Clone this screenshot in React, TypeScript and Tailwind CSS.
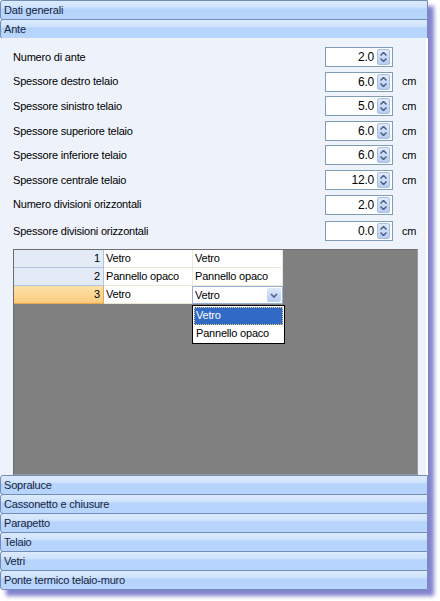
import React from 'react';

const font = { fontFamily: '"Liberation Sans", Arial, sans-serif', letterSpacing: '-0.2px' };

function Header({ title }: { title: string }) {
  return (
    <div className="h-[20px] shrink-0 flex items-center pl-[3px] border border-[#6f8db8] rounded-l-[3px] -mt-px first:mt-0 bg-[linear-gradient(to_bottom,#dcebfd_0%,#cfe3fd_35%,#b5d3fb_45%,#b8d6fd_100%)] text-[11px] text-[#16243c] leading-none">
      {title}
    </div>
  );
}

function Spinner() {
  return (
    <div className="w-[13px] h-[16px] mr-[2px] rounded-[2px] border border-[#a9bee2] bg-[linear-gradient(to_bottom,#dfe9fb,#b6cdf4)] flex flex-col items-center justify-center gap-[2px]">
      <svg width="7" height="4" viewBox="0 0 7 4"><path d="M0.5 3.5 L3.5 0.5 L6.5 3.5" stroke="#4d6185" strokeWidth="1.5" fill="none" /></svg>
      <svg width="7" height="4" viewBox="0 0 7 4"><path d="M0.5 0.5 L3.5 3.5 L6.5 0.5" stroke="#4d6185" strokeWidth="1.5" fill="none" /></svg>
    </div>
  );
}

const fields = [
  { label: 'Numero di ante', value: '2.0', unit: '' },
  { label: 'Spessore destro telaio', value: '6.0', unit: 'cm' },
  { label: 'Spessore sinistro telaio', value: '5.0', unit: 'cm' },
  { label: 'Spessore superiore telaio', value: '6.0', unit: 'cm' },
  { label: 'Spessore inferiore telaio', value: '6.0', unit: 'cm' },
  { label: 'Spessore centrale telaio', value: '12.0', unit: 'cm' },
  { label: 'Numero divisioni orizzontali', value: '2.0', unit: '' },
  { label: 'Spessore divisioni orizzontali', value: '0.0', unit: 'cm' },
];

const rows = [
  { n: 1, a: 'Vetro', b: 'Vetro' },
  { n: 2, a: 'Pannello opaco', b: 'Pannello opaco' },
  { n: 3, a: 'Vetro', b: 'Vetro' },
];

export default function App() {
  return (
    <div className="w-[440px] h-[601px] bg-white text-[11px] text-black" style={font}>
      <div className="w-[428px] h-[590px] flex flex-col shadow-[6px_6px_4px_rgba(90,90,190,0.75)]">
        <Header title="Dati generali" />
        <Header title="Ante" />

        {/* Ante content */}
        <div className="flex-1 flex flex-col bg-[#eef3fb] border-r-2 border-white pl-[13px] pr-[9px] pt-[9px] pb-px -mt-px">
          <div className="flex flex-col gap-[4.6px]">
            {fields.map((f, i) => (
              <div key={f.label} className={`h-[20px] flex items-center ${i === 7 ? 'mt-[2px]' : ''}`}>
                <span className="flex-1">{f.label}</span>
                <div className="w-[68px] h-[20px] bg-white border border-[#7f9db9] flex items-center">
                  <span className="flex-1 text-right pr-[3px] text-[12px]">{f.value}</span>
                  <Spinner />
                </div>
                <span className="w-[24px] pl-[9px]">{f.unit}</span>
              </div>
            ))}
          </div>

          {/* Grid */}
          <div className="relative flex-1 mt-[8px] mr-[-1px] bg-[#808080] border border-[#9a9a9a] border-t-[#6e6e6e] border-l-[#6e6e6e]">
            {rows.map((r) => (
              <div key={r.n} className="flex h-[18px]">
                <div
                  className={`w-[90px] text-right pr-[3px] leading-[17px] border-b border-r ${
                    r.n === 3
                      ? 'bg-[linear-gradient(to_bottom,#fde1a8,#fbcb80)] border-[#e8a84c]'
                      : 'bg-[#e3ebf7] border-[#b3c5de]'
                  }`}
                >
                  {r.n}
                </div>
                <div className="w-[89px] bg-white pl-[2px] leading-[17px] border-b border-r border-[#ece9d8]">{r.a}</div>
                {r.n === 3 ? (
                  <div className="w-[91px] bg-white border border-[#98b0d6] flex items-center pl-[2px] -ml-px">
                    <span className="flex-1">{r.b}</span>
                    <div className="w-[14px] h-[14px] mr-px rounded-[2px] bg-[linear-gradient(to_bottom,#dde8fb,#b4cbf3)] flex items-center justify-center">
                      <svg width="8" height="5" viewBox="0 0 8 5"><path d="M1 1 L4 4 L7 1" stroke="#4d6185" strokeWidth="1.6" fill="none" /></svg>
                    </div>
                  </div>
                ) : (
                  <div className="w-[90px] bg-white pl-[2px] leading-[17px] border-b border-r border-[#ece9d8]">{r.b}</div>
                )}
              </div>
            ))}

            {/* Dropdown list */}
            <div className="absolute left-[178px] top-[55px] w-[93px] h-[39px] bg-white border border-black flex flex-col">
              <div className="h-[18px] mx-px mt-px bg-[#316ac5] text-white pl-[2px] leading-[16px] outline-1 outline-dotted outline-[#f0d080] -outline-offset-1">
                Vetro
              </div>
              <div className="h-[18px] pl-[3px] leading-[17px]">Pannello opaco</div>
            </div>
          </div>
        </div>

        <Header title="Sopraluce" />
        <Header title="Cassonetto e chiusure" />
        <Header title="Parapetto" />
        <Header title="Telaio" />
        <Header title="Vetri" />
        <Header title="Ponte termico telaio-muro" />
      </div>
    </div>
  );
}
